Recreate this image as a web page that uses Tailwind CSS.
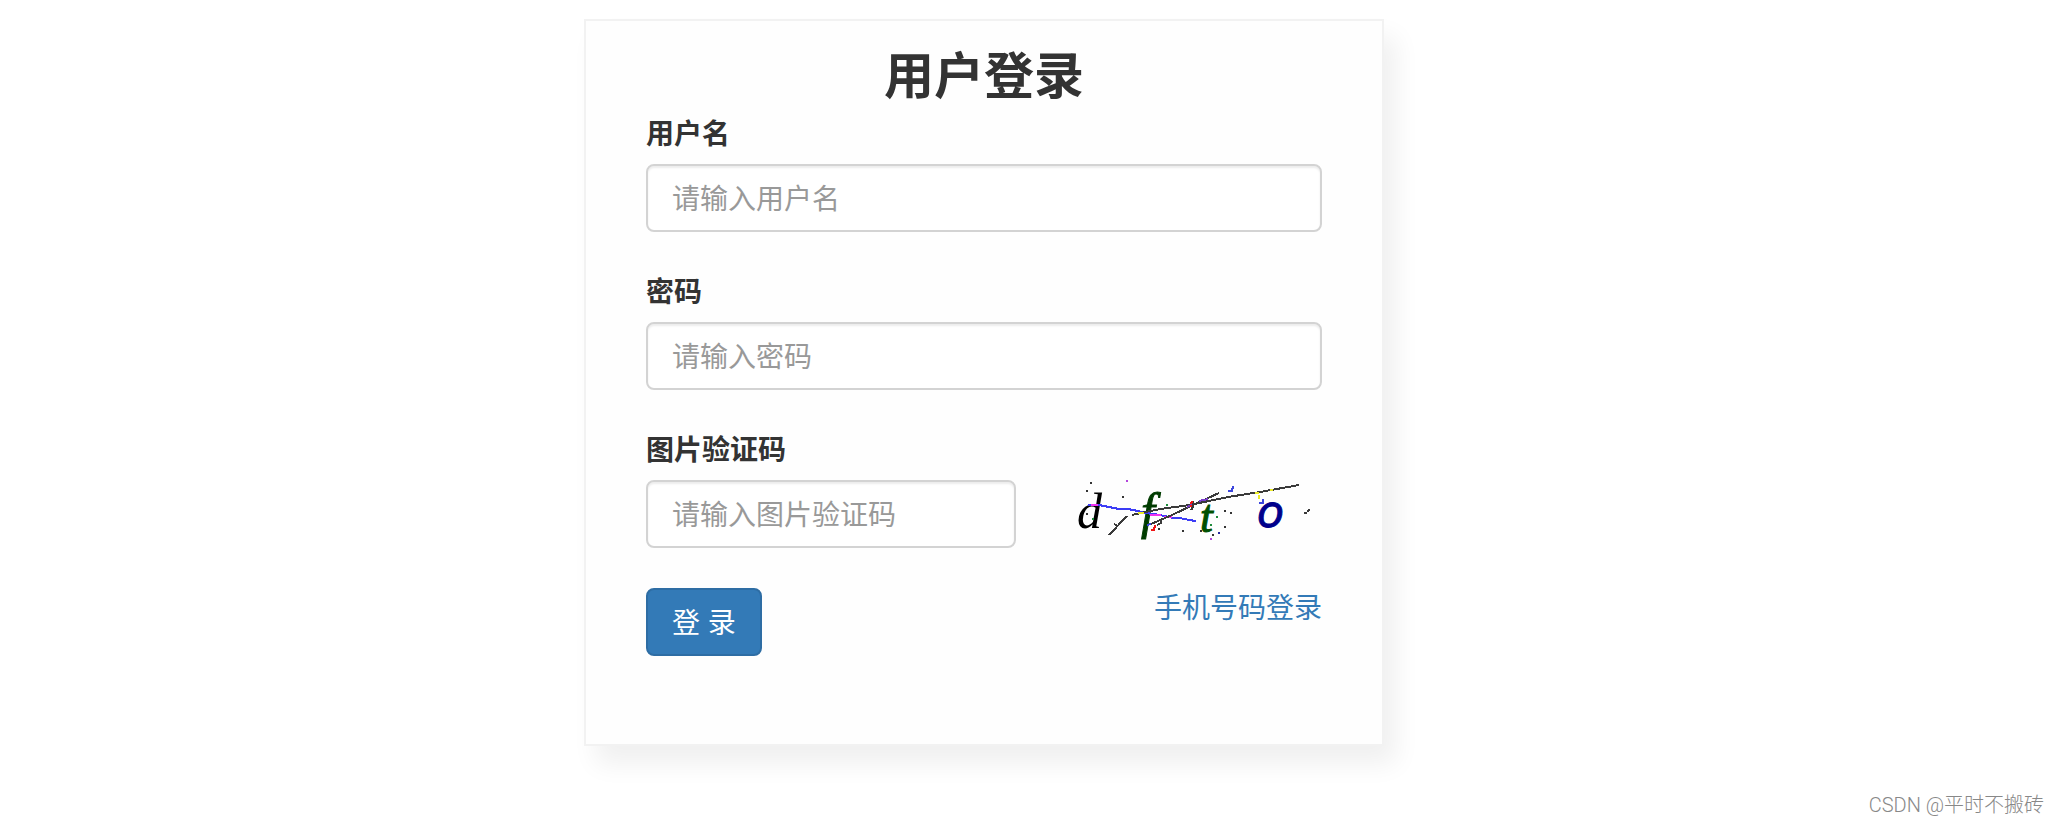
<!DOCTYPE html>
<html lang="zh-CN">
<head>
  <meta charset="UTF-8" />
  <meta name="viewport" content="width=device-width, initial-scale=1.0" />
  <title>用户登录</title>
  <script src="https://cdn.jsdelivr.net/npm/@tailwindcss/browser@4"></script>
</head>
<body class="min-h-screen flex flex-col bg-white text-[#333] text-[28px] leading-[42px] font-['Liberation_Sans','Noto_Sans_CJK_SC',sans-serif]">

  <main class="flex justify-center pt-[19px] pr-[92px]">
    <div class="w-full max-w-[800px] border-2 border-[#f2f2f2] bg-[#fefefe] px-[60px] pt-5 pb-[88px] shadow-[12px_18px_24px_#f0f0f0]">
      <h1 class="text-[50px] leading-[73px] font-bold text-center">用户登录</h1>

      <form id="loginForm">
        <div class="mb-10">
          <label for="username" class="block mb-2 font-bold">用户名</label>
          <input type="text" id="username" name="username" placeholder="请输入用户名" class="block w-full h-[68px] px-6 pt-[3px] border-2 border-[#d3d3d3] rounded-lg bg-white placeholder:text-[#999] shadow-[inset_0_2px_2px_rgba(0,0,0,0.075)]" />
        </div>

        <div class="mb-10">
          <label for="password" class="block mb-2 font-bold">密码</label>
          <input type="password" id="password" name="password" placeholder="请输入密码" class="block w-full h-[68px] px-6 pt-[3px] border-2 border-[#d3d3d3] rounded-lg bg-white placeholder:text-[#999] shadow-[inset_0_2px_2px_rgba(0,0,0,0.075)]" />
        </div>

        <div class="mb-10">
          <label for="captcha" class="block mb-2 font-bold">图片验证码</label>
          <div class="flex justify-between">
            <input type="text" id="captcha" name="captcha" placeholder="请输入图片验证码" class="block w-[370px] h-[68px] px-6 pt-[3px] border-2 border-[#d3d3d3] rounded-lg bg-white placeholder:text-[#999] shadow-[inset_0_2px_2px_rgba(0,0,0,0.075)]" />
            <svg class="w-[262px] h-[68px] overflow-visible" viewBox="0 9 262 68" fill="none" stroke-width="2" role="img" aria-label="验证码">
              <!-- letters -->
              <g class="font-['Liberation_Serif',serif] italic" stroke-width="1">
                <text x="17" y="57" font-size="50" fill="#000">d</text>
                <text x="81" y="57" font-size="50" fill="#003c00" stroke="#003c00">f</text>
                <text x="140" y="61" font-size="46" fill="#005000" stroke="#005000">t</text>
              </g>
              <text x="197" y="56" font-size="44" fill="#00008b" stroke="#00008b" stroke-width="1" class="font-['DejaVu_Sans',sans-serif] italic">o</text>
              <!-- noise lines -->
              <g shape-rendering="crispEdges">
                <path stroke="#3c3cf5" d="M28 34h11l10 2 10 2h9l10 2 8 2 14 2 13 3h7l9 2 7 1" />
                <path stroke="#f032f0" d="M31 34h7M90 44h11M104 46h8" />
                <path stroke="#3a3a3a" d="M72 44L100 38L130 34L168 26L200 21L239 14" />
                <path stroke="#3a3a3a" d="M49 64L67 45M91 53L112 44L133 34L159 22" />
                <path stroke="#783cc8" d="M139 30l9-2M127 36l6-3" />
                <path stroke="#3a3a3a" d="M54 53l4 2M97 54l4-2v-4M131 39l2-3v-6M244 42h3M248 41l1-3" />
                <path stroke="#f01414" d="M91 59h3l1-5M130 32l3-1M131 36v-2" />
                <path stroke="#3c46dc" d="M87 54l4-1M168 20h4l1-5M199 32h4v-4" />
                <path stroke="#ebeb28" d="M78 42h6M195 22h4M199 24v4M210 19h3" />
                <!-- noise dots -->
                <path stroke="#333" d="M30 12h2M26 20h2M62 26h2M26 43h2M98 58h2M122 60h2M140 60h2M164 40h2M170 42h2M164 56h2M152 64h2" />
                <path stroke="#b446dc" d="M66 10h2M150 68h2" />
                <path stroke="#2828a0" d="M158 62h2" />
                <path stroke="#1e8c3c" d="M106 34h2M150 54h2M156 46h2M32 48h2" />
              </g>
            </svg>
          </div>
        </div>

        <div class="flex justify-between items-start">
          <button type="submit" class="h-[68px] px-6 pt-[3px] border-2 border-[#2e6da4] rounded-lg bg-[#337ab7] hover:bg-[#286090] text-white cursor-pointer">登 录</button>
          <a href="#" class="text-[#337ab7] hover:underline">手机号码登录</a>
        </div>
      </form>
    </div>
  </main>

  <footer class="mt-auto pr-4 pb-[3px] text-right text-xl font-light text-[#888] font-['Roboto','Noto_Sans_CJK_SC',sans-serif]">CSDN @平时不搬砖</footer>

</body>
</html>
